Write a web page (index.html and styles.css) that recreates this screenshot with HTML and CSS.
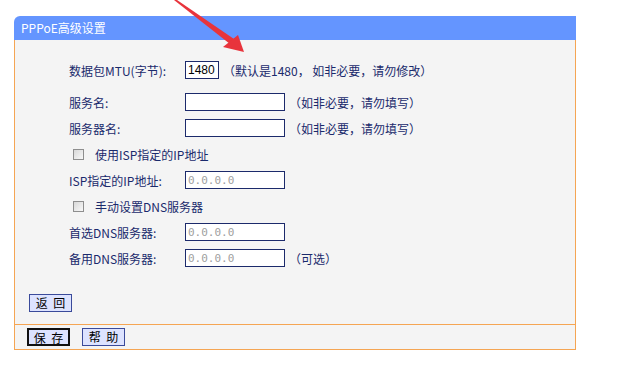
FILE: index.html
```html
<!DOCTYPE html>
<html>
	<head>
		<meta charset="utf-8"/>
		<title>PPPoE高级设置</title>
		<link rel="stylesheet" href="styles.css">
	</head>
	<body>
		<div class="panel">
			<div class="panel-head">PPPoE高级设置</div>
			<div class="panel-body">
				<div class="form-row first">
					<span class="label">数据包MTU(字节):</span>
					<input type="text" class="input-box mtu" value="1480"/>
					<span class="hint">（默认是1480， 如非必要，请勿修改）</span>
				</div>
				<div class="form-row">
					<span class="label">服务名:</span>
					<input type="text" class="input-box"/>
					<span class="hint">（如非必要，请勿填写）</span>
				</div>
				<div class="form-row">
					<span class="label">服务器名:</span>
					<input type="text" class="input-box"/>
					<span class="hint">（如非必要，请勿填写）</span>
				</div>
				<div class="form-row">
					<span class="check"></span>
					<span>使用ISP指定的IP地址</span>
				</div>
				<div class="form-row">
					<span class="label">ISP指定的IP地址:</span>
					<input type="text" class="input-box ip" value="0.0.0.0"/>
				</div>
				<div class="form-row">
					<span class="check"></span>
					<span>手动设置DNS服务器</span>
				</div>
				<div class="form-row">
					<span class="label">首选DNS服务器:</span>
					<input type="text" class="input-box ip" value="0.0.0.0"/>
				</div>
				<div class="form-row">
					<span class="label">备用DNS服务器:</span>
					<input type="text" class="input-box ip" value="0.0.0.0"/>
					<span class="hint">（可选）</span>
				</div>
				<div class="back-row">
					<button class="button">返 回</button>
				</div>
			</div>
			<div class="panel-foot">
				<button class="button default">保 存</button>
				<button class="button">帮 助</button>
			</div>
		</div>

		<svg class="arrow" width="260" height="60" viewBox="0 0 260 60">
			<polygon points="174,0 177,0 234,39 230,44" fill="#e8343c"/>
			<polygon points="244,52 223,47 238,35" fill="#e8343c"/>
		</svg>
	</body>
</html>
```

FILE: styles.css
```css
body{margin: 0px;font-size: 12px;font-family: "Noto Sans CJK SC", "DejaVu Sans", sans-serif;color: #1a2a6c;background: #fff;}
.panel{margin: 16px 0 0 14px;width: 562px;}
.panel-head{height: 24px;line-height: 24px;background: #6495ff;color: #fff;border-top-left-radius: 6px;padding-left: 7px;}
.panel-body{background: #f4f4f4;border-left: 1px solid #f5a553;border-right: 1px solid #f5a553;padding: 17px 0 12px 0;}
.form-row{display: flex;align-items: center;height: 26px;padding-left: 54px;}
.form-row.first{margin-bottom: 6px;}
.label{width: 116px;flex: none;}
.input-box{box-sizing: border-box;width: 100px;height: 18px;margin: 0;padding: 0 2px;border: 1px solid #1c2a6b;background: #fff;font-family: "Liberation Sans", sans-serif;font-size: 12px;color: #000;outline: none;}
.input-box.mtu{width: 34px;}
.input-box.ip{color: #a0a0a0;font-family: "DejaVu Sans Mono", monospace;font-size: 11px;}
.hint{margin-left: 4px;}
.check{box-sizing: border-box;width: 11px;height: 11px;margin: 0 11px 0 4px;border: 1px solid #8e8e8e;background: linear-gradient(135deg, #d8d8d8, #f8f8f8);}
.back-row{padding: 23px 0 0 14px;}
.button{box-sizing: border-box;height: 18px;width: 43px;padding: 0;border: 1px solid #3a4a9a;background: #dde3ff;color: #000;font-family: "Noto Sans CJK SC", sans-serif;font-size: 12px;line-height: 16px;word-spacing: 3px;cursor: pointer;}
.panel-foot{display: flex;align-items: center;gap: 12px;height: 24px;padding-left: 12px;background: #f4f4f4;border: 1px solid #f5a553;}
.button.default{border: 2px solid #111;}
.arrow{position: absolute;left: 0;top: 0;}
```
